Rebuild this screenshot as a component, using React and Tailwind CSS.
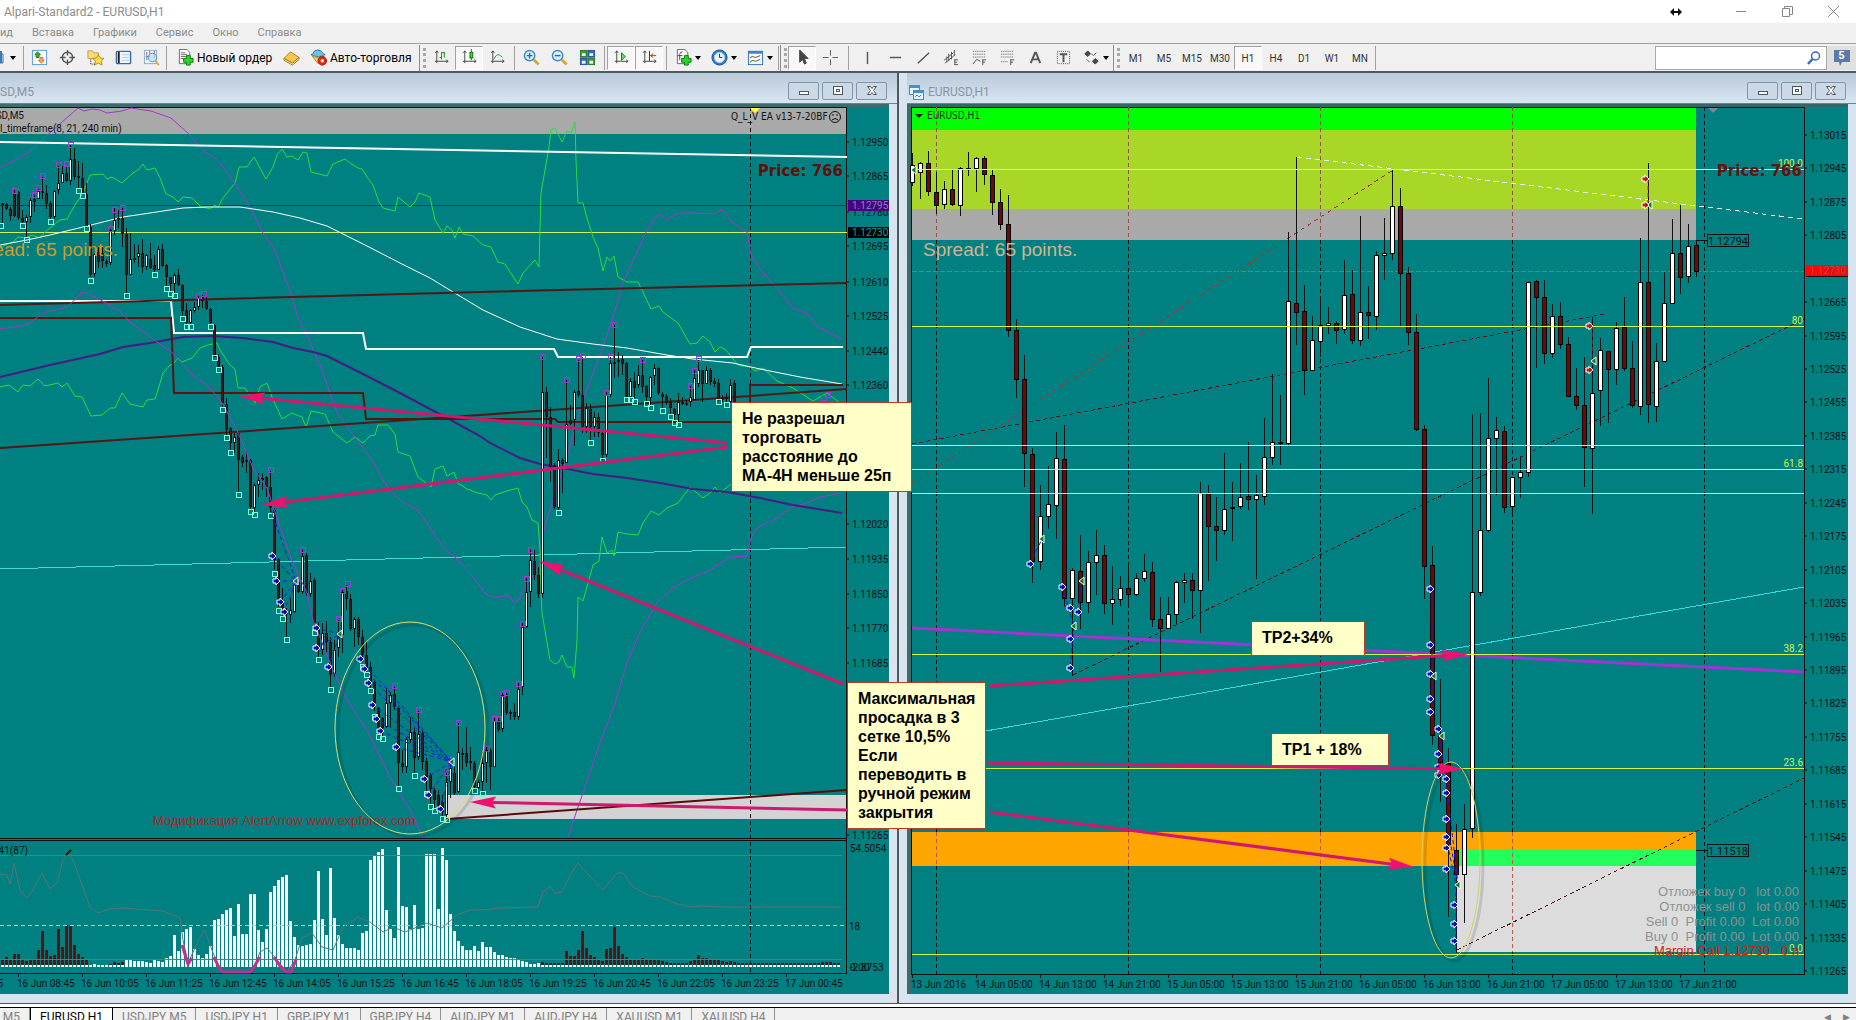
import React, { useState } from 'react';

// candle rows: [high, low, bodyTop, bodyBottom, rising]
const M5_CANDLES = [
    [203,224,203,205,0],[203,210,204,209,0],[207,221,209,216,0],[190,217,193,216,0],[191,220,192,218,0],[210,223,218,222,0],
    [215,238,217,222,1],[198,223,200,217,1],[195,212,199,202,0],[189,199,191,199,1],[177,199,191,193,0],[185,209,193,204,0],
    [201,220,203,217,0],[190,219,191,217,1],[166,194,183,190,1],[166,183,173,183,1],[166,182,173,181,0],[145,185,159,181,1],
    [148,180,159,177,0],[161,188,176,178,0],[163,193,178,193,0],[183,228,194,227,0],[224,277,227,275,0],[253,277,254,274,1],
    [247,268,252,262,0],[247,268,253,261,0],[259,267,261,264,0],[229,265,230,263,1],[208,235,220,231,1],[210,228,218,220,0],
    [208,247,218,234,0],[228,293,234,275,0],[233,275,259,275,1],[244,263,258,260,0],[245,267,253,257,1],[239,273,253,267,0],
    [254,270,255,267,1],[243,269,259,268,0],[255,273,265,270,0],[246,270,249,270,1],[244,267,249,266,0],[264,287,265,277,0],
    [277,292,277,284,0],[273,293,275,284,1],[269,286,275,285,0],[284,317,285,311,0],[303,325,310,323,0],[309,325,310,323,1],
    [302,313,307,311,1],[296,310,298,307,1],[295,308,297,301,0],[297,310,301,309,0],[308,325,309,323,0],[324,355,325,357,0],
    [354,368,357,367,0],[365,407,367,403,0],[398,435,404,430,0],[427,450,428,443,0],[433,453,437,443,1],[432,492,433,460,0],
    [455,467,457,463,0],[451,473,460,462,0],[459,509,460,507,0],[483,512,485,508,1],[473,497,480,485,1],[473,490,478,480,0],
    [476,497,477,487,0],[471,512,487,508,0],[508,570,510,560,0],[558,607,559,602,0],[588,617,601,608,0],[608,637,612,614,0],
    [598,623,610,615,1],[580,613,582,612,1],[577,593,582,592,0],[550,594,556,592,1],[553,596,555,593,0],[573,597,581,594,1],
    [578,630,580,623,0],[622,657,630,647,0],[623,655,633,650,1],[621,653,633,642,0],[637,687,642,675,0],[640,677,650,674,1],
    [620,657,637,648,1],[590,653,592,635,1],[585,610,591,599,0],[594,631,599,629,0],[617,647,619,629,1],[617,645,619,637,0],
    [630,657,637,655,0],[642,673,655,668,0],[662,688,667,683,0],[681,711,682,703,0],[707,735,708,730,0],[717,737,718,728,0],
    [688,728,703,727,1],[692,727,695,703,1],[687,710,694,707,0],[707,786,708,763,0],[750,773,763,767,0],[737,773,739,767,1],
    [717,743,732,740,1],[728,773,732,758,0],[711,760,734,757,1],[730,770,733,762,0],[758,792,761,777,0],[773,804,775,789,0],
    [788,808,790,800,0],[790,812,795,807,0],[795,817,802,812,0],[773,817,782,815,1],[760,798,768,782,1],[767,795,773,793,0],
    [723,793,752,792,1],[748,770,753,755,0],[727,767,753,763,0],[747,770,761,763,0],[761,788,763,787,0],[780,789,782,788,1],
    [752,792,763,782,1],[747,783,750,763,1],[748,790,750,767,0],[718,767,721,767,1],[718,732,720,730,0],[693,732,695,729,1],
    [693,715,694,713,0],[710,720,712,714,0],[703,720,712,717,0],[683,720,689,717,1],[623,695,627,687,1],[578,628,592,627,1],
    [550,607,560,592,1],[550,580,561,575,0],[567,598,575,594,0],[357,598,392,594,1],[387,458,392,417,0],[407,482,417,467,0],
    [463,509,465,507,0],[449,510,460,508,1],[458,493,460,464,0],[380,463,424,463,1],[405,425,420,424,0],[390,446,392,420,1],
    [360,397,391,395,0],[357,433,395,427,0],[403,433,408,427,1],[404,440,409,427,0],[412,437,417,427,1],[413,437,417,433,0],
    [430,460,433,455,0],[392,457,395,455,1],[357,397,363,395,1],[325,378,362,364,0],[352,377,360,362,0],[355,375,359,364,0],
    [362,398,363,397,0],[378,398,381,397,1],[372,398,381,388,0],[365,388,375,385,1],[360,393,375,387,0],[385,403,386,397,0],
    [376,405,377,398,1],[364,385,368,376,1],[367,395,368,393,0],[392,408,394,397,0],[394,405,396,403,0],[398,415,401,408,0],
    [408,421,409,415,0],[393,422,402,415,1],[397,405,402,404,0],[400,406,403,405,0],[386,407,397,402,1],[370,400,378,400,1],
    [360,387,370,384,1],[370,402,370,384,0],[366,384,370,384,1],[368,385,370,382,0],[378,387,381,384,0],[379,401,383,399,0],
    [395,402,398,400,0],[393,403,397,399,0],[379,403,385,402,1],[380,402,383,402,0],
];

const H1_CANDLES = [
    [153,186,165,183,1],[162,199,163,173,1],[151,196,163,192,0],[172,214,192,206,0],[181,209,189,205,1],[170,206,189,205,0],
    [167,216,168,206,1],[152,176,168,169,0],[157,192,158,169,1],[156,185,158,175,0],[170,215,175,203,0],[189,230,202,225,0],
    [195,337,224,331,0],[319,398,330,380,0],[355,487,379,454,0],[448,583,454,562,0],[485,570,516,562,1],[466,529,504,517,1],
    [432,539,458,506,1],[425,607,459,599,0],[568,676,570,599,1],[535,629,571,603,0],[551,613,562,603,1],[530,595,555,563,1],
    [545,614,555,604,0],[566,625,599,604,1],[576,606,588,600,1],[563,607,588,595,0],[573,596,578,595,1],[554,582,571,579,1],
    [562,627,572,620,0],[597,672,619,629,0],[597,629,614,629,1],[581,624,582,615,1],[573,603,580,583,1],[573,619,580,591,0],
    [482,633,493,591,1],[485,581,493,527,0],[497,561,526,531,0],[453,535,509,531,1],[482,541,507,509,0],[463,509,497,507,1],
    [442,510,496,500,0],[475,579,495,500,1],[418,505,457,497,1],[374,465,442,458,1],[395,465,442,444,0],[232,445,301,444,1],
    [157,345,303,313,0],[285,395,311,371,0],[316,371,340,371,1],[300,357,325,342,1],[307,334,323,326,1],[321,344,323,331,0],
    [260,334,295,330,1],[270,344,294,341,0],[216,346,312,341,1],[286,339,312,316,0],[251,330,255,317,1],[218,280,253,256,1],
    [170,260,206,254,1],[188,327,206,274,0],[267,345,273,333,0],[314,431,332,430,0],[425,599,429,567,0],[546,745,565,736,0],
    [679,802,736,763,0],[748,917,763,845,0],[824,953,850,875,0],[804,923,829,875,1],[414,838,592,829,1],[413,596,530,593,1],
    [378,532,438,531,1],[417,495,430,439,1],[426,513,431,508,0],[477,517,477,507,1],[458,498,472,478,1],[282,477,282,473,1],
    [280,368,281,298,0],[280,364,297,354,0],[304,358,316,354,1],[302,349,316,345,0],[337,396,344,397,0],[368,410,396,406,0],
    [357,487,405,448,0],[317,514,393,449,1],[338,426,350,391,1],[352,423,351,370,0],[322,385,328,370,1],[297,371,327,369,0],
    [341,408,368,406,0],[238,415,282,407,1],[163,423,282,405,0],[343,422,361,407,1],[272,361,303,362,1],[219,303,253,304,1],
    [205,294,253,278,0],[224,283,246,277,1],[240,277,245,272,0],
];

const VOLUME = [
    8,10,7,13,13,7,6,7,8,17,36,17,11,12,38,20,42,41,22,13,10,7,2,3,2,2,2,3,5,4,5,
    8,7,6,6,6,5,4,7,6,5,9,11,32,16,35,38,40,18,12,9,13,21,47,48,53,57,59,31,63,33,33,73,73,37,25,38,75,81,87,90,92,
    46,30,22,21,22,23,47,96,48,32,99,49,32,23,19,19,19,17,34,36,107,111,115,118,57,38,29,120,61,60,38,62,38,39,113,113,113,
    58,119,107,53,36,26,21,17,17,21,16,25,20,20,15,12,12,10,9,9,7,6,5,3,3,4,
    5,4,4,4,4,4,16,11,11,17,36,19,12,10,7,6,18,19,40,21,13,10,7,7,7,9,7,7,7,7,6,5,4,4,4,4,4,6,7,12,9,9,7,7,7,6,5,6,5,
    4,4,4,4,4,4,4,4,4,4,4,4,4,4,4,4,4,4,4,4,4,5,5,5,4,4,
];

const UPPER_GREEN = '0,247 13,242 18,237 25,238 32,235 40,238 45,232 55,224 60,220 67,219 75,205 83,193 90,175 103,174 107,179 112,177 122,183 133,173 138,170 143,164 147,170 155,168 160,178 166,194 173,197 178,202 183,197 192,198 200,206 210,209 215,205 218,207 223,198 235,183 239,167 247,167 254,157 266,179 273,167 277,155 282,149 287,157 292,156 298,160 303,152 307,153 311,172 327,176 333,164 345,159 350,163 358,168 362,169 367,177 373,185 379,202 383,208 395,211 398,197 410,207 415,202 419,193 430,197 435,220 443,233 447,226 452,230 455,238 459,227 463,234 473,236 483,245 491,247 498,262 505,264 518,284 523,273 535,260 539,267 541,193 549,147 551,130 555,128 562,142 567,131 571,133 575,122 576,160 578,203 583,203 587,218 593,237 598,248 603,271 607,257 610,261 614,256 618,277 627,282 638,282 642,290 651,309 659,306 663,312 678,323 690,344 697,343 703,336 710,342 715,352 720,347 725,349 738,365 750,367 755,371 763,368 777,381 793,388 813,401 827,393 839,402';
const LOWER_GREEN = '0,387 9,385 18,392 23,385 30,386 38,379 45,386 58,383 62,387 67,383 75,396 82,397 91,416 102,415 110,408 115,408 122,393 130,404 143,407 147,400 155,399 158,390 163,373 170,365 173,364 178,358 182,362 192,358 200,348 208,345 217,343 220,350 230,365 235,369 238,388 245,388 255,403 260,387 267,383 272,397 282,419 292,413 302,417 306,427 311,411 325,414 333,432 347,443 355,437 363,443 370,436 375,435 378,425 388,425 395,434 398,452 410,456 418,477 431,487 435,469 443,466 447,476 454,472 458,483 467,489 478,493 487,495 491,500 495,495 507,491 518,488 522,502 527,507 532,520 538,523 540,550 541,590 542,613 550,660 555,664 559,662 562,655 567,667 572,667 574,678 577,640 578,597 583,601 588,583 593,565 599,561 602,537 607,553 612,550 614,556 618,532 627,534 638,535 643,523 651,511 659,515 667,508 678,503 690,487 703,498 710,493 715,487 720,493 731,484';
const UPPER_BAND = '0,168 15,160 30,152 45,137 78,108 84,111 92,109 100,110 107,113 122,111 131,108 151,111 171,118 190,135 203,150 217,160 228,173 250,207 263,233 275,250 292,297 298,318 308,337 322,370 337,413 347,427 370,457 388,488 403,502 418,510 433,532 445,550 455,557 470,573 477,582 485,593 492,597 500,597 507,595 514,602 519,600 523,590 532,577 542,560 543,533 558,483 567,457 583,400 603,347 613,317 623,283 647,230 655,218 660,214 666,219 680,213 693,213 713,214 722,210 725,212 732,222 747,232 751,255 763,273 777,288 792,307 808,314 818,327 842,339';
const LOWER_BAND = '0,329 20,326 30,323 43,313 67,307 83,292 97,298 120,311 130,322 157,342 173,353 193,375 210,388 222,403 237,430 253,468 267,488 280,527 293,563 307,593 313,620 333,670 347,700 367,730 390,777 410,810 423,837';
const LOWER_BAND_TAIL = '568,837 577,810 590,773 600,743 615,703 627,663 640,632 657,603 673,588 693,577 707,572 730,557 747,556 751,538 757,528 777,518 790,508 810,502 820,497 842,493';
const SLOW_MA = '0,377 50,365 100,354 123,347 150,343 183,337 213,336 243,338 273,342 293,348 313,352 327,356 363,374 400,393 447,418 480,436 490,443 520,458 540,464 563,468 593,474 627,478 660,483 693,489 727,492 760,498 793,505 842,513';
const FAST_MA = '0,245 27,240 50,235 83,227 123,217 150,213 183,208 207,207 240,207 273,212 300,218 327,226 343,234 367,246 400,263 430,278 453,292 483,310 520,327 557,339 593,344 627,348 667,355 693,359 733,363 760,369 800,377 842,384';
const OSCILLATOR = '0,874 7,875 10,884 14,863 20,890 27,898 33,890 42,873 50,889 57,883 63,860 68,853 73,860 82,885 90,907 98,913 110,909 123,908 163,911 180,918 183,940 188,963 200,937 205,930 213,953 222,972 252,972 260,952 267,948 273,955 287,972 295,960 302,938 312,933 322,947 333,950 343,927 358,917 370,922 383,932 393,927 405,932 427,923 442,928 457,915 470,910 480,910 500,908 538,907 543,892 550,886 555,893 562,892 573,870 578,863 587,873 603,890 617,873 623,873 633,887 650,896 660,897 677,904 693,907 700,906 727,907 842,907';

const LOW_MARKS = [[0,225],[22,225],[26,239],[50,221],[78,190],[82,195],[86,228],[90,280],[126,295],[154,274],[166,288],[170,293],[174,295],[182,318],[186,326],[190,326],[210,326],[214,357],[218,369],[222,409],[226,437],[230,452],[238,494],[250,511],[254,514],[270,515],[274,573],[278,610],[282,618],[286,639],[314,632],[318,659],[330,689],[362,666],[366,674],[370,690],[374,716],[378,736],[382,738],[398,788],[414,775],[426,793],[430,806],[434,810],[442,818],[446,819],[474,790],[482,793],[558,512],[590,442],[602,460],[626,399],[630,399],[634,401],[646,403],[650,407],[662,410],[670,416],[674,422],[678,424],[718,401],[726,404]];
const HIGH_MARKS = [[14,190],[34,194],[38,187],[42,175],[58,164],[66,163],[70,144],[110,228],[114,209],[122,207],[198,295],[203,293],[270,469],[302,549],[295,581],[338,618],[342,590],[347,583],[394,685],[418,709],[446,772],[450,759],[458,722],[486,748],[494,718],[498,718],[502,693],[506,692],[518,683],[522,623],[526,578],[530,549],[542,356],[566,379],[578,358],[582,355],[606,392],[610,356],[614,324],[642,359],[690,385],[694,370],[698,358],[823,397],[827,394]];

const M5_BUYS = [[272,556],[276,581],[280,602],[284,612],[316,628],[316,648],[328,667],[360,659],[364,669],[368,683],[372,705],[376,719],[380,731],[396,747],[424,779],[428,795],[440,809]];
const M5_EXITS = [[296,581],[340,634],[452,762]];
const H1_BUYS = [[1030,564],[1062,587],[1070,608],[1078,612],[1070,639],[1070,668],[1430,589],[1430,645],[1430,674],[1430,699],[1430,712],[1438,729],[1438,754],[1438,767],[1438,775],[1446,779],[1446,793],[1446,819],[1446,837],[1446,848],[1446,869],[1454,905],[1454,924],[1454,941]];
const H1_EXITS = [[914,170],[1042,539],[1082,581],[1074,626],[1434,676],[1442,736],[1458,885],[1594,361],[1650,205]];
const H1_SELLS = [[1589,326],[1589,370],[1645,179],[1645,205]];

const M5_PRICES = [['1.12950',142],['1.12865',176],['1.12780',212],['1.12695',246],['1.12610',282],['1.12525',316],['1.12440',351],['1.12360',385],['1.12020',524],['1.11935',559],['1.11850',594],['1.11770',628],['1.11685',663],['1.11265',835]];
const H1_PRICES = [['1.13015',135],['1.12945',168],['1.12875',202],['1.12805',235],['1.12665',302],['1.12595',336],['1.12525',369],['1.12455',402],['1.12385',436],['1.12315',469],['1.12245',503],['1.12175',536],['1.12105',570],['1.12035',603],['1.11965',637],['1.11895',670],['1.11825',703],['1.11755',737],['1.11685',770],['1.11615',804],['1.11545',837],['1.11475',871],['1.11405',904],['1.11335',938],['1.11265',971]];
const M5_TIMES = ['16 Jun 08:45','16 Jun 10:05','16 Jun 11:25','16 Jun 12:45','16 Jun 14:05','16 Jun 15:25','16 Jun 16:45','16 Jun 18:05','16 Jun 19:25','16 Jun 20:45','16 Jun 22:05','16 Jun 23:25','17 Jun 00:45'];
const H1_TIMES = ['13 Jun 2016','14 Jun 05:00','14 Jun 13:00','14 Jun 21:00','15 Jun 05:00','15 Jun 13:00','15 Jun 21:00','16 Jun 05:00','16 Jun 13:00','16 Jun 21:00','17 Jun 05:00','17 Jun 13:00','17 Jun 21:00'];
const H1_LEVELS = [[169,'100.0'],[326,'80'],[445,''],[469,'61.8'],[493,''],[654,'38.2'],[768,'23.6'],[954,'0.0']];

// right-aligned account summary, bottom corner of the H1 chart
const ACCOUNT = [
    [896, 'Отложек buy 0\u00a0\u00a0 lot 0.00'],
    [911, 'Отложек sell 0\u00a0\u00a0 lot 0.00'],
    [926, 'Sell 0\u00a0 Profit 0.00\u00a0 Lot 0.00'],
    [941, 'Buy 0\u00a0 Profit 0.00\u00a0 Lot 0.00'],
];

const AXIS = "font-['Roboto','Liberation_Sans',sans-serif] text-[10px]";
const SMALL = "font-['DejaVu_Sans_Condensed','DejaVu_Sans',sans-serif] text-[10px]";
const ARIAL = "font-['Liberation_Sans',Arial,sans-serif]";
const UI = "font-['Roboto','Noto_Sans',sans-serif]";
const NOTE = "absolute border border-[#c03a28] bg-[#ffffc8] py-1.5 pl-2.5 font-['Liberation_Sans',Arial,sans-serif] text-[16px] font-bold leading-[19px] text-black";

const Candles = ({ rows, x0, step, wide }) => (
    <g shapeRendering="crispEdges">
        {rows.map(([high, low, top, bottom, up], i) => {
            const x = x0 + step * i;
            const half = wide ? 2 : 1;
            const h = Math.max(bottom - top, 1);
            return (
                <g key={i}>
                    <rect x={x} y={high} width="1" height={low - high} fill="#111" />
                    <rect x={x - half} y={top} width={half * 2 + 1} height={h} fill={wide ? '#000' : up ? '#111' : '#2a1010'} />
                    {h > 2 && (
                        <rect x={x - half + 1} y={top + 1} width={half * 2 - 1} height={h - 2} fill={up ? '#fff' : wide ? '#6b0a08' : '#4a1512'} />
                    )}
                </g>
            );
        })}
    </g>
);

const EntryArrow = ({ x, y, color }) => (
    <path d={`M${x - 3} ${y - 2}h3v-2l4 4l-4 4v-2h-3z`} fill={color} stroke="#fff" />
);

const ExitArrow = ({ x, y }) => (
    <path d={`M${x + 2} ${y - 4}v8l-5 -4z`} fill="#0a7a20" stroke="#fff" />
);

const ChartM5 = () => (
    <svg viewBox="0 104 889 890" preserveAspectRatio="xMaxYMin meet" className="block h-full w-full bg-[#008080]">
        <rect x="0" y="104" width="889" height="3" fill="#3a6e6e" />
        <rect x="0" y="107" width="847" height="27" fill="#a9a9a9" />
        <rect x="447" y="795" width="400" height="24" fill="#d3d3d3" />
        <g fill="none" shapeRendering="crispEdges">
            <path d="M0 107.5H847M846.5 107V973M0 838.5H846M0 840.5H846M0 973.5H847" stroke="#111" />
            <path d="M0 205.5H847" stroke="#202a90" />
            <path d="M0 232.5H847" stroke="#d4f35c" />
            <path d="M750.5 107V973" stroke="#111" strokeDasharray="4 3" />
            <path d="M0 569L847 547" stroke="#40e0d0" />
        </g>
        <g fill="none">
            <polyline points={UPPER_GREEN} stroke="#22e042" />
            <polyline points={LOWER_GREEN} stroke="#22e042" />
            <polyline points={UPPER_BAND} stroke="#a238cc" />
            <polyline points={LOWER_BAND_TAIL} stroke="#a238cc" />
            <polyline points={FAST_MA} stroke="#fff" />
            <polyline points="0,142 847,157" stroke="#fff" strokeWidth="2" />
            <polyline points="0,301 171,301 174,333 363,333 366,349 554,349 558,357 747,357 751,347 843,347" stroke="#fff" strokeWidth="2" />
            <polyline points={SLOW_MA} stroke="#451c82" strokeWidth="2" />
            <polyline points="0,305 480,292 847,283" stroke="#4f1916" strokeWidth="2" />
            <polyline points="0,318 171,318 174,393 363,393 366,419 555,419 558,422 750,422 750,385 843,385" stroke="#5a1512" strokeWidth="2" />
            <polyline points="0,448 480,415 847,389" stroke="#4f1916" strokeWidth="2" />
            <polyline points="447,819 847,790" stroke="#5a0a0a" strokeWidth="2" />
        </g>
        <Candles rows={M5_CANDLES} x0={2} step={4} />
        <polyline points={LOWER_BAND} stroke="#a238cc" fill="none" />
        <g fill="none" stroke="#7fffd4" shapeRendering="crispEdges">
            {LOW_MARKS.map(([x, y]) => <rect key={x} x={x - 2} y={y - 2} width="5" height="5" />)}
        </g>
        <g fill="none" stroke="#9b3fd4" shapeRendering="crispEdges">
            {HIGH_MARKS.map(([x, y]) => <rect key={x} x={x - 2} y={y - 2} width="5" height="5" />)}
        </g>
        <g stroke="#1020d0" strokeDasharray="4 3">
            <line x1="271" y1="510" x2="296" y2="581" />
            {M5_BUYS.map(([x, y], i) => {
                const [ex, ey] = i < 4 ? M5_EXITS[0] : i < 7 ? M5_EXITS[1] : M5_EXITS[2];
                return <line key={i} x1={x} y1={y} x2={ex} y2={ey} />;
            })}
        </g>
        {M5_BUYS.map(([x, y], i) => <EntryArrow key={i} x={x} y={y} color="#0a10c0" />)}
        {M5_EXITS.map(([x, y], i) => <ExitArrow key={i} x={x} y={y} />)}

        <g shapeRendering="crispEdges">
            {VOLUME.map((h, i) => {
                const quiet = i < 22 || (i > 26 && i < 31) || i > 134;
                return (
                    <g key={i}>
                        <rect x={1 + i * 4} y={967 - h} width="3" height={h} fill={quiet ? '#5a1210' : '#fff'} />
                        {quiet && <rect x={1 + i * 4} y="965" width="3" height="2" fill="#fff" />}
                    </g>
                );
            })}
            <path d="M0 855.5H842M0 959.5H842" stroke="#5c7a7a" />
            <path d="M0 925.5H846" stroke="#a8d0d0" strokeDasharray="4 3" />
        </g>
        <polyline points={OSCILLATOR} fill="none" stroke="#5c7474" />
        <path d="M66 855l5 -5" stroke="#4a1010" strokeWidth="2" />
        <path d="M182 945l6 19l4 -6M214 957l5 11l4 4h27l4 -5l6 -10M274 957l6 9l6 6h5l5 -12" fill="none" stroke="#c72c90" strokeWidth="3" />

        <path d="M750 108h10l-5 5z" fill="#ffff40" />
        <text x="731" y="120" className={SMALL} fill="#111">Q_L_V EA v13-7-20BF</text>
        <g fill="none" stroke="#111">
            <circle cx="835" cy="117" r="5.500" />
            <path d="M832 120q3 -3 6 0M833 114v2M837 114v2" />
        </g>
        <text x="118" y="256" textAnchor="end" className={`${ARIAL} text-[19px]`} fill="#d09a28">Spread: 65 points.</text>
        <text x="843" y="176" textAnchor="end" className="font-['DejaVu_Sans',sans-serif] text-[15px] font-bold" fill="#5f100c">Price: 766</text>
        <text x="153" y="825" className={`${ARIAL} text-[13px]`} fill="#a52a2a">Модификация AlertArrow www.expforex.com</text>
        <g className={AXIS} fill="#111">
            <text x="24" y="119" textAnchor="end">EURUSD,M5</text>
            <text x="0" y="132">l_timeframe(8, 21, 240 min)</text>
            <text x="28" y="854" textAnchor="end">Flow41(87)</text>
            {M5_PRICES.map(([label, y]) => (
                <g key={label}>
                    <path d={`M847 ${y}h2`} stroke="#111" />
                    <text x="852" y={y + 4}>{label}</text>
                </g>
            ))}
            <text x="850" y="852">54.5054</text>
            <text x="849" y="930">18</text>
            <text x="850" y="971">0.00</text>
            <text x="850" y="971">-2.8753</text>
            {M5_TIMES.map((label, i) => (
                <g key={label}>
                    <path d={`M${18.5 + i * 64} 974v3`} stroke="#111" />
                    <text x={17 + i * 64} y="987">{label}</text>
                </g>
            ))}
            <text x="3" y="987" textAnchor="end">16 Jun 07:25</text>
            <rect x="848" y="200" width="41" height="11" fill="#4b0082" />
            <text x="852" y="209" fill="#6f8fb8">1.12795</text>
            <rect x="848" y="227" width="41" height="11" fill="#000" />
            <text x="852" y="236" fill="#0aa0a0">1.12730</text>
        </g>
    </svg>
);

const ChartH1 = () => (
    <svg viewBox="907 104 941 890" preserveAspectRatio="xMinYMin meet" className="block h-full w-full bg-[#008080]">
        <rect x="907" y="104" width="941" height="3" fill="#2f6868" />
        <rect x="907" y="104" width="4" height="890" fill="#3d6c6c" />
        <rect x="912" y="107" width="784" height="23" fill="#00ff00" />
        <rect x="912" y="130" width="784" height="79" fill="#a8d728" />
        <rect x="912" y="209" width="784" height="31" fill="#a9a9a9" />
        <rect x="912" y="832" width="784" height="34" fill="#ffa500" />
        <rect x="1456" y="850" width="240" height="16" fill="#22ff5a" />
        <rect x="1457" y="866" width="239" height="86" fill="#dcdcdc" />
        <g fill="none" shapeRendering="crispEdges">
            <path d="M911 107.5H1804.5V974M911.5 107V974.5H1805" stroke="#111" />
            {[936, 1128, 1320, 1512, 1704].map((x) => (
                <g key={x} strokeDasharray="4 3">
                    <path d={x < 1700 ? `M${x}.5 240V832M${x}.5 ${x > 1500 ? 952 : 866}V974` : `M${x}.5 107V974`} stroke="#111" />
                    {x < 1700 && <path d={`M${x}.5 107V240`} stroke="#8f5350" />}
                    {x < 1700 && <path d={`M${x}.5 832V${x > 1500 ? 952 : 866}`} stroke="#c05a50" />}
                </g>
            ))}
            <path d="M912 271.5H1804" stroke="#c25a50" strokeDasharray="5 2" />
            <path d="M1297 157L1804 219" stroke="#e8fff0" strokeDasharray="5 4" />
            <path d="M912 483L1393 170" stroke="#a0362c" strokeDasharray="4 4" />
            <path d="M912 444L1605 314M1073 675L1804 319M1457 950L1804 778" stroke="#50181a" strokeDasharray="4 3" />
            <path d="M912 744L1804 587" stroke="#30e0e0" />
        </g>
        <path d="M912 628L1804 672" stroke="#a034d4" strokeWidth="3" />
        <Candles rows={H1_CANDLES} x0={912} step={8} wide />
        {H1_LEVELS.map(([y, label]) => (
            <g key={y}>
                <path d={`M912 ${y}.5H1804`} stroke={y === 169 ? '#ffff00' : '#d4f34c'} shapeRendering="crispEdges" />
                <text x="1803" y={y - 2} textAnchor="end" className={AXIS} fill="#c8f850">{label}</text>
            </g>
        ))}
        <g stroke="#1020d0" strokeDasharray="4 3" fill="none">
            <path d="M1030 564L1042 539M1062 587L1074 626L1070 668M1078 612L1082 581" />
            <path d="M1432 589V712M1438 729L1446 779L1458 885M1446 819L1458 885M1446 837L1456 885V950" />
            <path d="M1592 326V370M1648 179V205" stroke="#b04030" />
        </g>
        {H1_BUYS.map(([x, y], i) => <EntryArrow key={i} x={x} y={y} color="#0a10c0" />)}
        {H1_EXITS.map(([x, y], i) => <ExitArrow key={i} x={x} y={y} />)}
        {H1_SELLS.map(([x, y], i) => <EntryArrow key={i} x={x} y={y} color="#c81810" />)}

        <path d="M1708 108h10l-5 5z" fill="#7a8a98" />
        <path d="M915 114h8l-4 4z" fill="#062a06" />
        <text x="927" y="119" className={SMALL} fill="#083808">EURUSD,H1</text>
        <text x="923" y="256" className={`${ARIAL} text-[19px]`} fill="#d2b48c">Spread: 65 points.</text>
        <text x="1802" y="176" textAnchor="end" className="font-['DejaVu_Sans',sans-serif] text-[15px] font-bold" fill="#6b100c">Price: 766</text>
        <g fill="none" stroke="#111" shapeRendering="crispEdges">
            <path d="M1696 240.5h11M1696 850.5h11" />
            <rect x="1707.5" y="234.5" width="41" height="12" />
            <rect x="1707.5" y="844.5" width="41" height="12" />
        </g>
        <g className="font-['Roboto',sans-serif] text-[11px]" fill="#111">
            <text x="1708" y="245">1.12794</text>
            <text x="1708" y="855">1.11518</text>
        </g>
        <g className={`${ARIAL} text-[13px]`} fill="#8b9393" textAnchor="end">
            {ACCOUNT.map(([y, line]) => <text key={y} x="1799" y={y}>{line}</text>)}
            <text x="1799" y="955" fill="#d81810">{'Margin Call 1.12730\u00a0\u00a0 0 п'}</text>
        </g>
        <g className={AXIS} fill="#111">
            {H1_PRICES.map(([label, y]) => (
                <g key={label}>
                    <path d={`M1805 ${y}h2`} stroke="#111" />
                    <text x="1810" y={y + 4}>{label}</text>
                </g>
            ))}
            {H1_TIMES.map((label, i) => (
                <g key={label}>
                    <path d={`M${912.5 + i * 64} 975v3`} stroke="#111" />
                    <text x={911 + i * 64} y="988">{label}</text>
                </g>
            ))}
            <rect x="1806" y="265" width="42" height="12" fill="#111" />
            <rect x="1806" y="265" width="42" height="11" fill="#f80808" />
            <text x="1810" y="274" fill="#8a5a50">1.12730</text>
        </g>
    </svg>
);

const Pointer = ({ from, to }) => {
    const [x1, y1] = from;
    const [x2, y2] = to;
    const length = Math.hypot(x2 - x1, y2 - y1);
    const angle = (Math.atan2(y2 - y1, x2 - x1) * 180) / Math.PI;
    return (
        <g transform={`translate(${x1} ${y1}) rotate(${angle})`}>
            <path d={`M0 0H${length - 20}`} stroke="#d0186f" strokeWidth="3" />
            <path d={`M${length} 0l-26 -6l4 6l-4 6z`} fill="#f0106f" />
        </g>
    );
};

const Annotations = () => (
    <>
        <svg viewBox="0 73 1856 930" preserveAspectRatio="xMinYMin meet" className="pointer-events-none absolute inset-0 h-full w-full">
            <g fill="none">
                <ellipse cx="413" cy="731" rx="75" ry="106" stroke="#00000020" strokeWidth="3" />
                <ellipse cx="410" cy="728" rx="75" ry="106" stroke="#dede6c" />
                <ellipse cx="1454" cy="863" rx="29" ry="98" stroke="#00000020" strokeWidth="3" />
                <ellipse cx="1451" cy="860" rx="29" ry="98" stroke="#d4d060" />
            </g>
            <Pointer from={[728, 443]} to={[239, 396]} />
            <Pointer from={[728, 447]} to={[262, 505]} />
            <Pointer from={[843, 684]} to={[539, 561]} />
            <Pointer from={[847, 810]} to={[470, 802]} />
            <Pointer from={[989, 686]} to={[1468, 654]} />
            <Pointer from={[987, 763]} to={[1463, 769]} />
            <Pointer from={[989, 812]} to={[1414, 867]} />
        </svg>
        <p className={`${NOTE} left-[731px] top-[329px] w-[181px]`}>
            Не разрешал<br />торговать<br />расстояние до<br />МА-4Н меньше 25п
        </p>
        <p className={`${NOTE} left-[847px] top-[609px] w-[139px]`}>
            Максимальная<br />просадка в 3<br />сетке 10,5%<br />Если<br />переводить в<br />ручной режим<br />закрытия
        </p>
        <p className={`${NOTE} left-[1251px] top-[548px] h-[35px] w-[114px]`}>TP2+34%</p>
        <p className={`${NOTE} left-[1271px] top-[660px] w-[118px]`}>TP1 + 18%</p>
    </>
);

const Icon = ({ children }) => (
    <svg viewBox="0 0 18 18" className="size-[17px] shrink-0" fill="none" stroke="#555">{children}</svg>
);

const axes = <path d="M4 2v13M2 13h14M2.500 4L4 2l1.500 2M14 11.500l2 1.500l-2 1.500" stroke="#444" />;
const plus = <path d="M10 7h4v3h3v4h-3v3h-4v-3H7v-4h3z" fill="#2ad82a" stroke="#067806" />;

const ICONS = {
    watch: <><rect x="1.500" y="1.500" width="15" height="15" fill="#fff" stroke="#5a9cd0" /><path d="M7 3l3 3H8.500v3h-3V6H4z" fill="#30b830" stroke="#108010" /><path d="M11 15l3-3h-1.500V9h-3v3H8z" fill="#f8b080" stroke="#e06020" /></>,
    target: <><circle cx="9" cy="9" r="5.500" strokeWidth="1.500" /><path d="M9 1v6M9 11v6M1 9h6M11 9h6" strokeWidth="1.500" /></>,
    folder: <><path d="M1 2h5l1 2h5v6H1z" fill="#f6dc7c" stroke="#c8a038" /><path d="M12 6l2 3.500l4 .5l-3 2.800l1 4.200l-4-2l-4 2l1-4.200L6 10l4-.5z" fill="#ffdc48" stroke="#b88818" /><path d="M4 11v5h4" strokeDasharray="1 1" stroke="#222" /></>,
    navigator: <><rect x="1.500" y="2.500" width="15" height="13" rx="1" fill="#eef6ff" stroke="#3470a8" strokeWidth="1.500" /><path d="M4 3v12" stroke="#222" strokeWidth="2" /><path d="M7 6h8M7 9h8M7 12h8" stroke="#b8cce0" /></>,
    tester: <><rect x="1.500" y="1.500" width="13" height="14" fill="#f4f8ff" stroke="#8aaccc" /><path d="M4 3v9M7 2v7M12 2v8M3 8h3" stroke="#778" /><circle cx="10" cy="9" r="4.500" fill="#b4dcf0aa" stroke="#5a90c0" /><path d="M13 12.500l4 4.500" stroke="#e0b030" strokeWidth="2" /></>,
    order: <><path d="M2.500 .5h8l3 3v12h-11z" fill="#fff" stroke="#666" /><path d="M4 4h5M4 6h7M4 8h6M4 10h3" stroke="#666" />{plus}</>,
    book: <><path d="M1 10l7-7l9 6l-7 6z" fill="#f4c850" stroke="#b08020" /><path d="M1 10v2l9 5l7-6v-2l-7 6z" fill="#fff0b0" stroke="#a87410" /></>,
    robot: <><path d="M3 5q1-4 5-4t6 4l2 1q-7 4-15 0z" fill="#70c0e8" stroke="#2878a8" /><path d="M2 7q6 4 13 0l-2 8H8z" fill="#f4d060" stroke="#b89028" /><circle cx="13" cy="12.500" r="4.500" fill="#d82c18" stroke="#a01808" /><rect x="11.500" y="11" width="3" height="3" fill="#fff" stroke="none" /></>,
    bars: <>{axes}<path d="M9 3v8M7 9h2M12 3v6M9 4h3" stroke="#148c14" /></>,
    candles: <>{axes}<path d="M11 0v12" stroke="#148c14" /><rect x="9.500" y="3.500" width="3" height="6" fill="#40d840" stroke="#0a700a" /></>,
    line: <>{axes}<path d="M5 11q4-9 9-2" stroke="#30a030" /></>,
    zoomIn: <><path d="M11.500 11.500l5 5" stroke="#d8a828" strokeWidth="3" /><circle cx="7" cy="7" r="5.500" fill="#d8f0fc" stroke="#3c88c8" strokeWidth="1.500" /><path d="M4 7h6M7 4v6" stroke="#2868a8" strokeWidth="1.500" /></>,
    zoomOut: <><path d="M11.500 11.500l5 5" stroke="#d8a828" strokeWidth="3" /><circle cx="7" cy="7" r="5.500" fill="#d8f0fc" stroke="#3c88c8" strokeWidth="1.500" /><path d="M4 7h6" stroke="#2868a8" strokeWidth="1.500" /></>,
    tile: <><rect x="1.500" y="1.500" width="7" height="7" fill="#3c9838" stroke="#287828" /><rect x="9.500" y="1.500" width="7" height="7" fill="#3c68b8" stroke="#2850a0" /><rect x="1.500" y="9.500" width="7" height="7" fill="#3c68b8" stroke="#2850a0" /><rect x="9.500" y="9.500" width="7" height="7" fill="#3c9838" stroke="#287828" /><path d="M3 6h4M11 6h4M3 14h4M11 14h4" stroke="#e8f4e8" strokeWidth="3" /></>,
    scroll: <>{axes}<path d="M9 4l4 4l-4 4z" fill="#60e060" stroke="#108010" /></>,
    shift: <>{axes}<path d="M9 2v11" stroke="#333" /><path d="M10 7h6M13 5l-3 2l3 2" stroke="#c83010" /></>,
    indicator: <><path d="M2.500 .5h8l3 3v12h-11z" fill="#fff" stroke="#666" /><path d="M8 3q-3 0-3 3v6M3 7h5" stroke="#444" />{plus}</>,
    clock: <><circle cx="9" cy="9" r="8" fill="#2c78c8" stroke="#1a5090" /><circle cx="9" cy="9" r="5.500" fill="#e8f4ff" stroke="#a0c8f0" /><path d="M9 5v4h3" stroke="#333" /></>,
    template: <><rect x="1.500" y="2.500" width="15" height="14" fill="#f4f8ff" stroke="#3470b8" /><path d="M2 3.500h14" stroke="#4080d0" strokeWidth="3" /><path d="M3 9l3-1l3 1l5-2" stroke="#804020" /><path d="M3 14l3-2l3 1l5-2" stroke="#208020" /></>,
    cursor: <path d="M6 1v13l3-3l2 5l2-1l-2-5h4z" fill="#444" stroke="#444" />,
    cross: <path d="M9 1v6M9 11v6M1 9h6M11 9h6" />,
    vline: <path d="M9 3v13" strokeWidth="1.500" />,
    hline: <path d="M3 9h12" strokeWidth="1.500" />,
    trend: <path d="M3 15L15 4" strokeWidth="1.500" />,
    channel: <path d="M1 12L11 4M2 15L13 6M4 8v6M6 5v8M9 3v8M12 1v6M12 11.500h4M12 14h3M12 16.500h4M12.500 11v6" />,
    fan: <><path d="M2 2.500h14M2 5.500h14M2 8.500h14" strokeDasharray="1 1" /><path d="M2 16l4-5l4 2M12.500 11v6M12 11.500h4M12 14h3" /></>,
    fibo: <><path d="M2 2.500h14M2 5.500h14M2 8.500h14M2 13.500h8" strokeDasharray="1 1" /><path d="M12.500 11v6M12 11.500h4M12 14h3" /></>,
    text: <path d="M4 15L8.500 4h1L14 15M6 11h6" strokeWidth="2" />,
    label: <><rect x="2.500" y="2.500" width="13" height="13" strokeDasharray="1 1" /><path d="M5 5.500h8M9 5v9" strokeWidth="2" /></>,
    shapes: <><path d="M5 2l3 3l-3 3l-3-3zM13 10l3 3l-3 3l-3-3z" fill="#444" stroke="#444" /><path d="M4 11l3 3M9 5l2 2l3-3" /></>,
};

const PRESSED = 'border border-[#a0a0a0] border-b-white border-r-white bg-[#f8f8f8]';

const Tool = ({ icon, label, pressed, menu, children, className = '' }) => (
    <button
        type="button"
        aria-label={label}
        title={label}
        className={`flex h-[24px] shrink-0 items-center ${children || menu ? 'gap-[3px]' : 'w-7 justify-center'} ${menu ? 'w-9 pl-1.5' : ''} ${pressed ? PRESSED : ''} ${className}`}
    >
        <Icon>{ICONS[icon]}</Icon>
        {children}
        {menu && <span className="border-x-[3px] border-t-[4px] border-x-transparent border-t-black" />}
    </button>
);

const Sep = ({ className = 'w-1.5' }) => (
    <span className={`flex h-[24px] shrink-0 justify-center ${className}`}><span className="w-px bg-[#a0a0a0]" /></span>
);

const Grip = ({ className = 'w-2' }) => (
    <span className={`flex h-[26px] shrink-0 items-center border-l border-[#8c8c8c] pl-[3px] ${className}`}>
        <span className="h-5 border-l-[3px] border-dotted border-[#a8a8a8]" />
    </span>
);

const Toolbar = () => {
    const [period, setPeriod] = useState('H1');
    return (
        <div className={`${UI} flex h-[29px] shrink-0 items-center border-b-2 border-[#4c5a5c] bg-[#f0f0f0] text-[12px] text-black`}>
            <button type="button" aria-label="Профили" className="flex w-[22px] shrink-0 items-center gap-1">
                <svg viewBox="8 0 6 18" className="h-[18px] w-1.5"><path d="M4 5h7v9H4z" fill="#dff0ff" stroke="#3a78b0" /><path d="M9 2v12" stroke="#3a78b0" strokeWidth="2" /></svg>
                <span className="border-x-[3px] border-t-[4px] border-x-transparent border-t-black" />
            </button>
            <Sep className="w-[3px]" />
            <Tool icon="watch" label="Обзор рынка" />
            <Tool icon="target" label="Окно данных" />
            <Tool icon="folder" label="Навигатор" />
            <Tool icon="navigator" label="Терминал" />
            <Tool icon="tester" label="Тестер стратегий" />
            <Sep className="w-[3px]" />
            <Tool icon="order" className="w-[109px] pl-[9px]">Новый ордер</Tool>
            <Tool icon="book" label="MetaEditor" />
            <Tool icon="robot" className="w-[114px] pl-[5px]">Авто-торговля</Tool>
            <Grip className="w-2" />
            <Tool icon="bars" label="Бары" />
            <Tool icon="candles" label="Японские свечи" pressed />
            <Tool icon="line" label="Линия" />
            <Sep />
            <Tool icon="zoomIn" label="Увеличить" />
            <Tool icon="zoomOut" label="Уменьшить" />
            <Tool icon="tile" label="Окна мозаикой" />
            <Sep />
            <Tool icon="scroll" label="Автопрокрутка" pressed />
            <Tool icon="shift" label="Сдвиг графика" pressed />
            <Sep />
            <Tool icon="indicator" label="Индикаторы" menu />
            <Tool icon="clock" label="Периоды" menu />
            <Tool icon="template" label="Шаблоны" menu />
            <Sep className="w-[3px]" />
            <Grip />
            <Tool icon="cursor" label="Курсор" pressed />
            <Tool icon="cross" label="Перекрестие" />
            <Sep className="w-[9px]" />
            <Tool icon="vline" label="Вертикальная линия" />
            <Tool icon="hline" label="Горизонтальная линия" />
            <Tool icon="trend" label="Трендовая линия" />
            <Tool icon="channel" label="Канал" />
            <Tool icon="fan" label="Веер Фибоначчи" />
            <Tool icon="fibo" label="Линии Фибоначчи" />
            <Tool icon="text" label="Текст" />
            <Tool icon="label" label="Метка" />
            <Tool icon="shapes" label="Стрелки" menu />
            <Grip className="w-[9px]" />
            {['M1', 'M5', 'M15', 'M30', 'H1', 'H4', 'D1', 'W1', 'MN'].map((p) => (
                <button
                    key={p}
                    type="button"
                    onClick={() => setPeriod(p)}
                    className={`h-[24px] w-7 shrink-0 pt-0.5 text-[10px] text-[#333] ${p === period ? PRESSED : ''}`}
                >
                    {p}
                </button>
            ))}
            <Sep className="w-[3px]" />
            <label className="ml-auto flex h-[24px] w-[172px] items-center border border-[#a8a8a8] bg-white pr-1">
                <input type="text" aria-label="Поиск" className="min-w-0 flex-1 outline-none" />
                <svg viewBox="0 0 16 16" className="size-4" fill="none" stroke="#3a68b8"><circle cx="9.500" cy="6" r="4" strokeWidth="1.500" /><path d="M6.500 9L2 14" strokeWidth="2.500" /></svg>
            </label>
            <button type="button" aria-label="Сообщения" className="relative flex h-[24px] w-[29px] items-center justify-center bg-[#e0e0e0]">
                <svg viewBox="0 0 16 16" className="absolute size-4" fill="#5b7aa8"><path d="M0 0h16v12H8l-2 4l-1-4H0z" /></svg>
                <span className="relative mb-1 text-[11px] font-bold leading-3 text-white">5</span>
            </button>
        </div>
    );
};

const WindowButtons = () => (
    <div className="mt-1.5 flex gap-[3px]">
        {[
            ['Свернуть', <rect key="a" x="1.500" y="6.500" width="9" height="3" />],
            ['Развернуть', <g key="b"><rect x="1.500" y="1.500" width="9" height="8" /><rect x="4.500" y="4.500" width="3" height="2" /></g>],
            ['Закрыть', <path key="c" d="M1.500 1.500h3l1.500 2l1.500-2h3l-3 4l3 4h-3l-1.500-2l-1.500 2h-3l3-4z" />],
        ].map(([label, shape]) => (
            <button key={label} type="button" aria-label={label} className="flex h-[18px] w-[31px] items-center justify-center rounded-[2px] border border-[#8294a8] bg-[#cbd8e6]">
                <svg viewBox="0 0 12 12" className="size-3" fill="#fff" stroke="#4c5866">{shape}</svg>
            </button>
        ))}
    </div>
);

const ChartWindow = ({ title, icon, className, children }) => (
    <section className={`flex min-w-0 flex-col bg-[#d9e4f1] pb-[9px] pr-2 ${className}`}>
        <header className={`${UI} -mr-2 flex h-[31px] shrink-0 items-center justify-between border-b border-[#6f8484] bg-linear-to-b from-[#b9cada] to-[#d9e5f2] pr-2.5 text-[12px] text-[#8a95a0]`}>
            <h2 className="flex items-center gap-1 pt-2">
                {icon && (
                    <svg viewBox="0 0 15 15" className="ml-0.5 size-[15px]" fill="#e8f4ff" stroke="#4c8cc0">
                        <rect x="0.500" y="0.500" width="10" height="9" /><path d="M1 2h9" strokeWidth="2" />
                        <rect x="4.500" y="5.500" width="10" height="9" /><path d="M5 7h9" strokeWidth="2" /><path d="M6 12l2-2l2 2l2-2" fill="none" />
                    </svg>
                )}
                {title}
            </h2>
            <WindowButtons />
        </header>
        <div className="min-h-0 flex-1">{children}</div>
    </section>
);

const TABS = ['EURUSD M5', 'EURUSD H1', 'USDJPY M5', 'USDJPY H1', 'GBPJPY M1', 'GBPJPY H4', 'AUDJPY M1', 'AUDJPY H4', 'XAUUSD M1', 'XAUUSD H4'];

const App = () => {
    const [tab, setTab] = useState('EURUSD H1');

    return (
        <div className="flex h-screen flex-col overflow-hidden bg-white">
            <header className={`${UI} flex h-[23px] shrink-0 items-center bg-white text-[12px] text-[#8c8c8c]`}>
                <h1 className="pl-1">Alpari-Standard2 - EURUSD,H1</h1>
                <div className="ml-auto flex items-center">
                    <svg viewBox="0 0 12 8" className="mr-9 h-2 w-3" fill="#111"><path d="M0 4l4-4v3h4V0l4 4l-4 4V5H4v3z" /></svg>
                    <button type="button" aria-label="Свернуть" className="flex w-[46px] justify-center"><span className="h-px w-2.5 bg-[#888]" /></button>
                    <button type="button" aria-label="Восстановить" className="flex w-[46px] justify-center">
                        <svg viewBox="0 0 11 11" className="size-[11px]" fill="none" stroke="#888"><path d="M0.500 2.500h7v8h-7zM2.500 2.500v-2h8v8h-3" /></svg>
                    </button>
                    <button type="button" aria-label="Закрыть" className="flex w-[46px] justify-center">
                        <svg viewBox="0 0 11 11" className="size-[11px]" stroke="#888"><path d="M0 0l11 11M11 0L0 11" /></svg>
                    </button>
                </div>
            </header>
            <nav className={`${UI} flex h-[21px] shrink-0 items-center gap-[19px] border-b border-[#a0a0a0] bg-[#f0f0f0] text-[11px] text-[#8c8c8c]`}>
                {['ид', 'Вставка', 'Графики', 'Сервис', 'Окно', 'Справка'].map((item) => (
                    <button key={item} type="button">{item}</button>
                ))}
            </nav>
            <Toolbar />
            <main className="relative grid min-h-0 flex-1 grid-cols-[899fr_957fr] grid-rows-1 border-b border-[#505050]">
                <ChartWindow title="SD,M5" className="border-r-2 border-[#505858]"><ChartM5 /></ChartWindow>
                <ChartWindow title="EURUSD,H1" icon className="pl-2"><ChartH1 /></ChartWindow>
                <Annotations />
            </main>
            <nav className={`${UI} mt-[3px] flex h-[13px] shrink-0 border-t border-black bg-[#f0f0f0] text-[12px] leading-[18px] text-[#808080]`}>
                {TABS.map((name, i) => (
                    <button
                        key={name}
                        type="button"
                        onClick={() => setTab(name)}
                        className={`h-[18px] shrink-0 whitespace-nowrap px-[9px] ${i === 0 ? '-ml-[54px]' : ''} ${name === tab ? 'border-x border-black bg-white text-black' : 'border-r border-[#909090]'}`}
                    >
                        {name}
                    </button>
                ))}
                <span className="ml-auto flex gap-3 pr-1.5 text-[9px]">
                    <button type="button" aria-label="Назад">◀</button>
                    <button type="button" aria-label="Вперёд">▶</button>
                </span>
            </nav>
        </div>
    );
};

export default App;
